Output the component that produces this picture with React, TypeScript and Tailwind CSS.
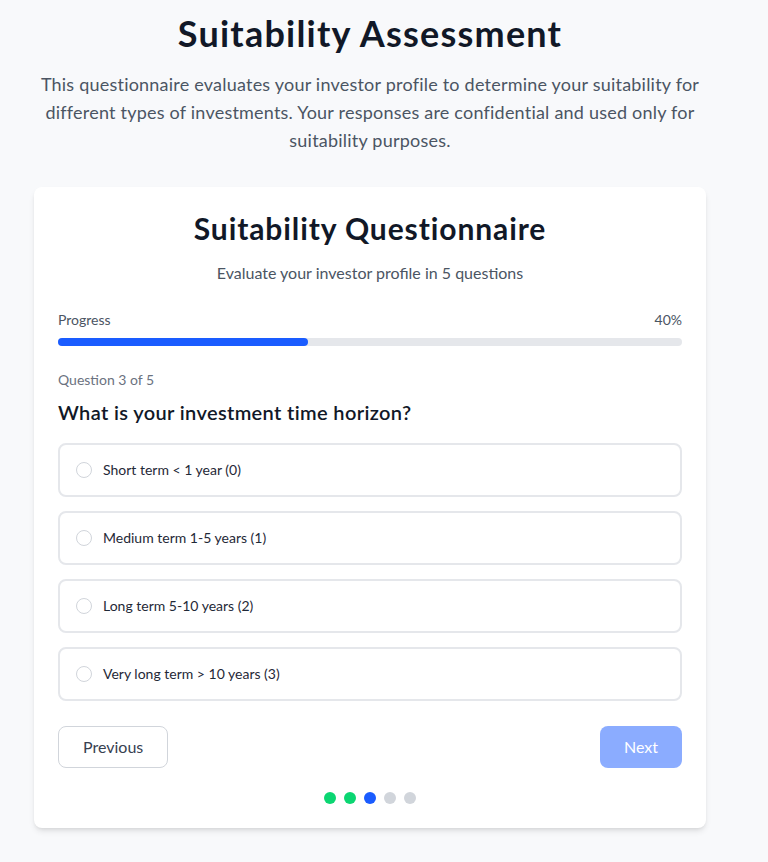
import React, { useState } from "react";

const options = [
  "Short term < 1 year (0)",
  "Medium term 1-5 years (1)",
  "Long term 5-10 years (2)",
  "Very long term > 10 years (3)",
];

const steps = ["done", "done", "current", "todo", "todo"];

export default function App() {
  const [selected, setSelected] = useState<number | null>(null);

  return (
    <div
      className="min-h-screen w-full bg-[#f8f9fb] pr-[28px] pt-[13px] pb-8"
      style={{ fontFamily: "Lato, 'Open Sans', sans-serif" }}
    >
      <div className="mx-auto w-[672px]">
        <h1 className="text-center text-4xl font-bold tracking-[0.034em] text-[#111827]">Suitability Assessment</h1>
        <p className="mt-[17px] text-center text-lg leading-7 tracking-[0.012em] text-[#4b5563]">
          This questionnaire evaluates your investor profile to determine your suitability for different types of
          investments. Your responses are confidential and used only for suitability purposes.
        </p>

        <div className="mt-[33px] rounded-lg bg-white p-6 shadow-md">
          <h2 className="-mt-[1px] text-center text-3xl font-bold tracking-[0.03em] text-[#111827]">
            Suitability Questionnaire
          </h2>
          <p className="mt-[15px] text-center text-base text-[#4b5563]">Evaluate your investor profile in 5 questions</p>

          <div className="mt-[25px] flex items-center justify-between text-sm text-[#4b5563]">
            <span>Progress</span>
            <span>40%</span>
          </div>
          <div className="mt-2 h-2 w-full rounded-full bg-[#e5e7eb]">
            <div className="h-2 rounded-full bg-[#1a5cff]" style={{ width: "40%" }} />
          </div>

          <div className="mt-6 text-sm text-[#6b7280]">Question 3 of 5</div>
          <h3 className="mt-2 text-xl font-semibold tracking-[0.018em] text-[#111827]">
            What is your investment time horizon?
          </h3>

          <div className="mt-[17px] flex flex-col gap-[14px]">
            {options.map((opt, i) => (
              <label
                key={opt}
                onClick={() => setSelected(i)}
                className="flex h-[54px] cursor-pointer items-center gap-[11px] rounded-lg border-2 border-[#e5e7eb] px-4"
              >
                <span
                  className={`h-4 w-4 rounded-full border ${
                    selected === i ? "border-[5px] border-[#1a5cff]" : "border-[#d1d5db]"
                  }`}
                />
                <span className="text-sm text-[#1f2937]">{opt}</span>
              </label>
            ))}
          </div>

          <div className="mt-[25px] flex items-center justify-between">
            <button className="h-[42px] rounded-lg border border-[#d1d5db] bg-white px-6 text-base text-[#374151]">
              Previous
            </button>
            <button
              disabled={selected === null}
              className="h-[42px] rounded-lg bg-[#1a5cff] px-6 text-base text-white disabled:opacity-50"
            >
              Next
            </button>
          </div>

          <div className="mt-6 flex justify-center gap-2">
            {steps.map((s, i) => (
              <span
                key={i}
                className={`h-3 w-3 rounded-full ${
                  s === "done" ? "bg-[#0bd672]" : s === "current" ? "bg-[#1a5cff]" : "bg-[#d1d5db]"
                }`}
              />
            ))}
          </div>
        </div>
      </div>
    </div>
  );
}
